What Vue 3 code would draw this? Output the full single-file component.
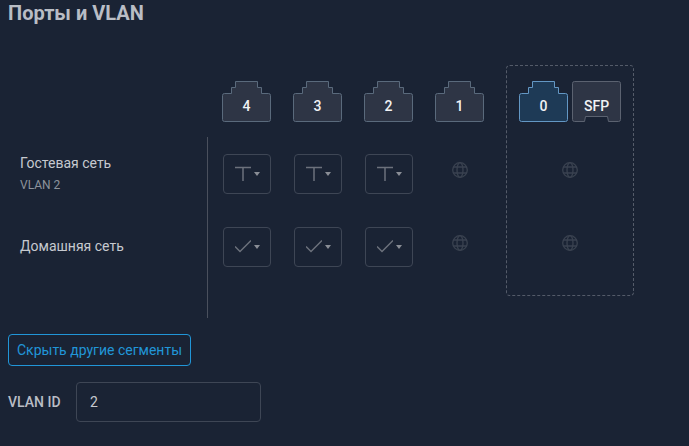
<template>
  <div class="page">
    <h2 class="title">Порты и VLAN</h2>

    <div class="matrix">
      <div class="names">
        <div class="names-body">
          <div v-for="seg in segments" :key="seg.name" class="seg-name">
            <div class="seg-title">{{ seg.name }}</div>
            <div v-if="seg.vlan" class="seg-vlan">{{ seg.vlan }}</div>
          </div>
        </div>
      </div>

      <div v-for="col in lanPorts" :key="col.port" class="port-col">
        <div class="port">
          <svg class="port-shape" width="49" height="41" viewBox="0 0 49 41">
            <path :d="rjPath" fill="#2e3545" stroke="#5a6a7c" />
          </svg>
          <span class="port-num">{{ col.port }}</span>
        </div>
        <div class="cells">
          <div v-for="(mode, i) in col.modes" :key="i" class="cell">
            <button v-if="mode !== 'wan'" class="mode-btn" type="button">
              <svg v-if="mode === 'tagged'" width="16" height="16" viewBox="0 0 16 16" fill="none" stroke="#6c717c" stroke-width="1.5">
                <path d="M0 1.5H16M8 1.5V15" />
              </svg>
              <svg v-else width="16" height="16" viewBox="0 0 16 16" fill="none" stroke="#6c717c" stroke-width="1.5">
                <path d="M0 7.5L5 12.5L16 1.5" />
              </svg>
              <span class="caret"></span>
            </button>
            <svg v-else class="globe" width="16" height="16" viewBox="0 0 16 16" fill="none" stroke="#3a4250" stroke-width="1.3">
              <circle cx="8" cy="8" r="7.3" />
              <ellipse cx="8" cy="8" rx="3" ry="7.3" />
              <path d="M1 5H15M1 11H15" />
            </svg>
          </div>
        </div>
      </div>

      <div class="wan-group">
        <div class="wan-ports">
          <div class="port">
            <svg class="port-shape" width="49" height="41" viewBox="0 0 49 41">
              <path :d="rjPath" fill="#1e3a56" stroke="#6397c4" />
            </svg>
            <span class="port-num">0</span>
          </div>
          <div class="port">
            <svg class="port-shape" width="49" height="41" viewBox="0 0 49 41">
              <path d="M2.5 .5H46.5A2 2 0 0 1 48.5 2.5V38.5A2 2 0 0 1 46.5 40.5H36.5L35.5 35.5H13.5L12.5 40.5H2.5A2 2 0 0 1 .5 38.5V2.5A2 2 0 0 1 2.5 .5Z" fill="#2e3545" stroke="#5b6270" />
            </svg>
            <span class="port-num">SFP</span>
          </div>
        </div>
        <div class="cells">
          <div v-for="seg in segments" :key="seg.name" class="cell">
            <svg class="globe" width="16" height="16" viewBox="0 0 16 16" fill="none" stroke="#3a4250" stroke-width="1.3">
              <circle cx="8" cy="8" r="7.3" />
              <ellipse cx="8" cy="8" rx="3" ry="7.3" />
              <path d="M1 5H15M1 11H15" />
            </svg>
          </div>
        </div>
      </div>
    </div>

    <button class="hide-btn" type="button">Скрыть другие сегменты</button>

    <div class="vlan-row">
      <label class="vlan-label" for="vlan-id">VLAN ID</label>
      <input id="vlan-id" class="vlan-input" type="text" value="2" />
    </div>
  </div>
</template>

<script setup>
const segments = [
  { name: 'Гостевая сеть', vlan: 'VLAN 2' },
  { name: 'Домашняя сеть', vlan: '' }
]

const lanPorts = [
  { port: 4, modes: ['tagged', 'check'] },
  { port: 3, modes: ['tagged', 'check'] },
  { port: 2, modes: ['tagged', 'check'] },
  { port: 1, modes: ['wan', 'wan'] }
]

const rjPath = 'M13.5 .5H35.5V6.5H39.5V12.5H46.5A2 2 0 0 1 48.5 14.5V38.5A2 2 0 0 1 46.5 40.5H2.5A2 2 0 0 1 .5 38.5V14.5A2 2 0 0 1 2.5 12.5H9.5V6.5H13.5Z'
</script>

<style>
html,
body {
  margin: 0;
  background: #1a2334;
  overflow: hidden;
}
</style>

<style scoped>
.page {
  height: 446px;
  box-sizing: border-box;
  padding: 0 8px;
  font-family: Roboto, "Liberation Sans", sans-serif;
  background: #1a2334;
  color: #c6c9cf;
}

.title {
  margin: 0;
  height: 26px;
  font-size: 20px;
  line-height: 27px;
  font-weight: 700;
  color: #b9bdc5;
}

.matrix {
  display: flex;
  align-items: flex-start;
  margin-top: 39px;
  height: 269px;
}

.names {
  width: 200px;
  padding-top: 72px;
  margin-right: 14px;
}

.names-body {
  height: 181px;
  border-right: 1px solid #4a505d;
  padding: 17px 0 0 12px;
  box-sizing: border-box;
}

.seg-name {
  height: 83px;
}

.seg-title {
  font-size: 14px;
  line-height: 18px;
  font-weight: 400;
  color: #c6c9cf;
}

.seg-vlan {
  margin-top: 5px;
  font-size: 12px;
  line-height: 16px;
  color: #8e939c;
}

.port-col {
  width: 49px;
  margin-right: 22px;
  padding-top: 16px;
}

.port {
  position: relative;
  width: 49px;
  height: 41px;
  box-sizing: border-box;
  padding-top: 9px;
  display: flex;
  align-items: center;
  justify-content: center;
}

.port-shape {
  position: absolute;
  top: 0;
  left: 0;
}

.port-num {
  position: relative;
  font-size: 14px;
  font-weight: 500;
  color: #f1f2f4;
}

.cells {
  margin-top: 32px;
}

.cell {
  height: 40px;
  margin-bottom: 33px;
  display: flex;
  justify-content: center;
}

.globe {
  margin-top: 8px;
}

.mode-btn {
  width: 48px;
  height: 40px;
  padding: 0 0 0 1px;
  display: flex;
  align-items: center;
  justify-content: center;
  gap: 3px;
  background: transparent;
  border: 1px solid #3e4655;
  border-radius: 4px;
}

.caret {
  width: 0;
  height: 0;
  border-left: 3px solid transparent;
  border-right: 3px solid transparent;
  border-top: 4px solid #8a8e96;
}

.wan-group {
  width: 128px;
  height: 231px;
  box-sizing: border-box;
  padding: 15px 12px 0;
  border: 1px dashed #545b69;
  border-radius: 4px;
}

.wan-ports {
  display: flex;
  gap: 4px;
}

.hide-btn {
  display: block;
  height: 32px;
  width: 183px;
  padding: 0;
  font-family: inherit;
  font-size: 14px;
  color: #2196d8;
  background: transparent;
  border: 1px solid #2196d8;
  border-radius: 4px;
}

.vlan-row {
  display: flex;
  align-items: center;
  margin-top: 16px;
}

.vlan-label {
  width: 68px;
  font-size: 14px;
  font-weight: 500;
  color: #b9bdc5;
}

.vlan-input {
  width: 185px;
  height: 40px;
  box-sizing: border-box;
  padding: 0 12px 0 13px;
  font-family: inherit;
  font-size: 14px;
  color: #c6c9cf;
  background: transparent;
  border: 1px solid #3e4655;
  border-radius: 4px;
  outline: none;
}
</style>
